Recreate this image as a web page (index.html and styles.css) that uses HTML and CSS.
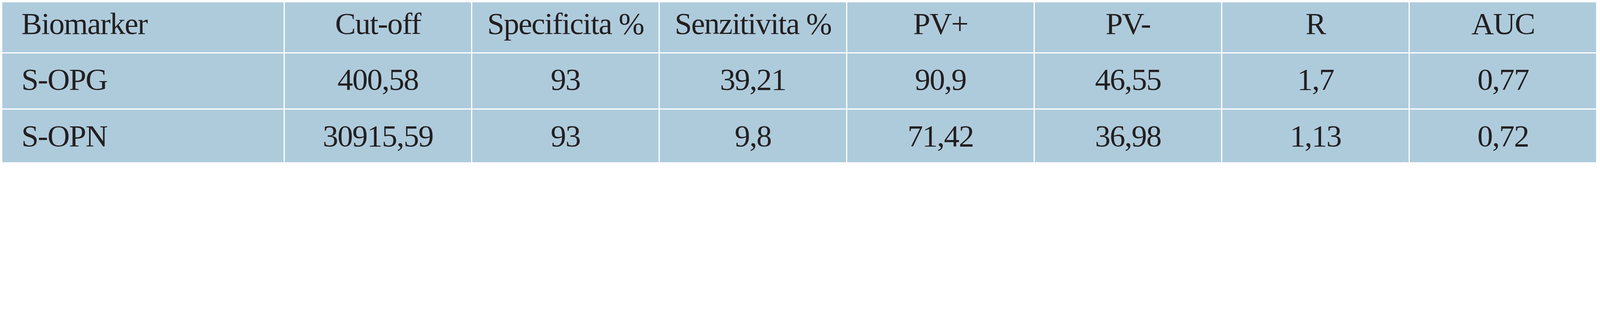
FILE: index.html
```html
<!DOCTYPE html>
<html lang="cs">
<head>
<meta charset="utf-8">
<meta name="viewport" content="width=device-width, initial-scale=1">
<title>Biomarker</title>
<link rel="stylesheet" href="styles.css">
</head>
<body>
<div class="table">
  <div class="cell head first">Biomarker</div>
  <div class="cell head">Cut-off</div>
  <div class="cell head">Specificita %</div>
  <div class="cell head">Senzitivita %</div>
  <div class="cell head">PV+</div>
  <div class="cell head">PV-</div>
  <div class="cell head">R</div>
  <div class="cell head">AUC</div>

  <div class="cell row2 first">S-OPG</div>
  <div class="cell row2">400,58</div>
  <div class="cell row2">93</div>
  <div class="cell row2">39,21</div>
  <div class="cell row2">90,9</div>
  <div class="cell row2">46,55</div>
  <div class="cell row2">1,7</div>
  <div class="cell row2">0,77</div>

  <div class="cell row3 first">S-OPN</div>
  <div class="cell row3">30915,59</div>
  <div class="cell row3">93</div>
  <div class="cell row3">9,8</div>
  <div class="cell row3">71,42</div>
  <div class="cell row3">36,98</div>
  <div class="cell row3">1,13</div>
  <div class="cell row3">0,72</div>
</div>
</body>
</html>
```
FILE: styles.css
```css
:root {
  /* one unit = one pixel of the 7644px-wide design */
  --u: calc(100vw / 7644);
}

html, body {
  margin: 0;
  padding: 0;
  background: #ffffff;
  overflow: hidden;
}

body {
  padding: calc(12 * var(--u)) 0 0 calc(12 * var(--u));
  font-family: "Liberation Serif", "Times New Roman", serif;
  color: #231f20;
}

.table {
  display: grid;
  width: calc(7614 * var(--u));
  grid-template-columns: calc(1343 * var(--u)) repeat(7, minmax(0, 1fr));
  grid-template-rows: calc(238 * var(--u)) calc(262 * var(--u)) calc(251 * var(--u));
  column-gap: calc(5.5 * var(--u));
  row-gap: calc(6.5 * var(--u));
}

.cell {
  background: #aecbdc;
  font-size: calc(148 * var(--u));
  line-height: calc(148 * var(--u));
  letter-spacing: calc(-3.5 * var(--u));
  text-align: center;
  white-space: nowrap;
  box-sizing: border-box;
}

.cell.first {
  text-align: left;
  padding-left: calc(90 * var(--u));
}

.head {
  padding-top: calc(27 * var(--u));
}

.row2 {
  padding-top: calc(50 * var(--u));
}

.row3 {
  padding-top: calc(51 * var(--u));
}
```
